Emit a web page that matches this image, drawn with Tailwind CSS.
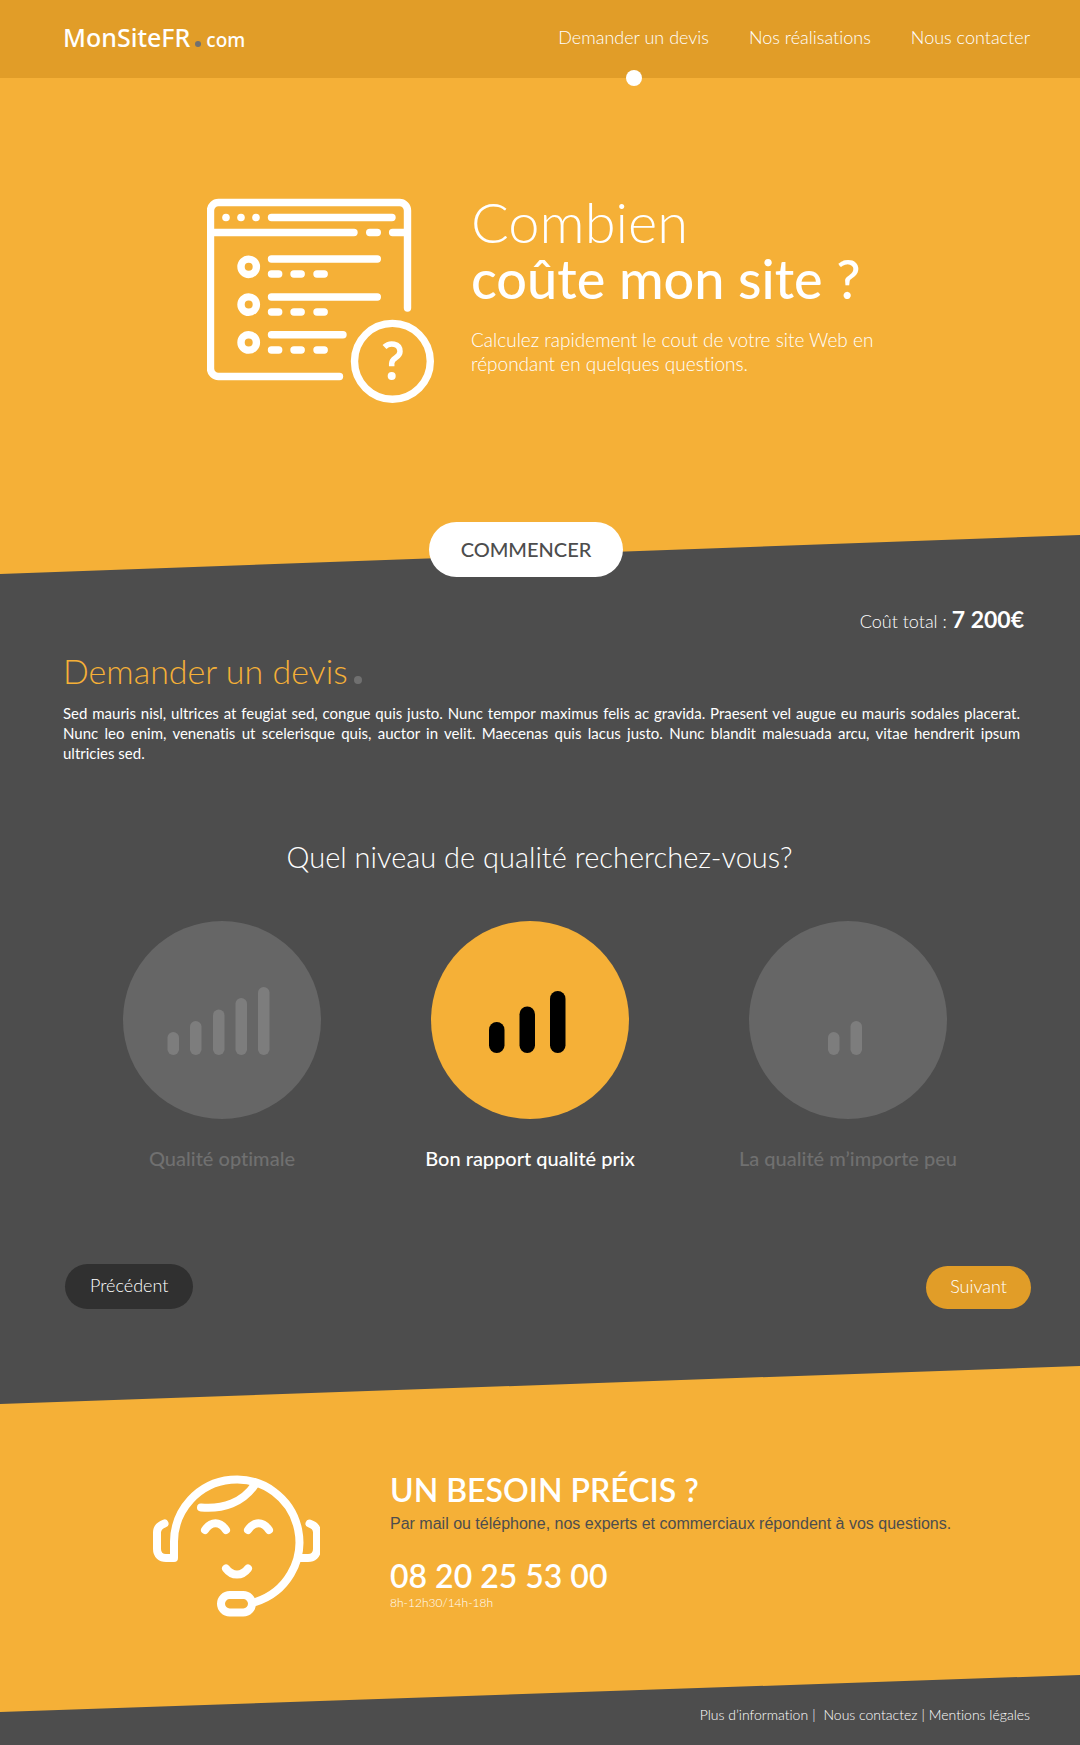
<!DOCTYPE html>
<html lang="fr">
<head>
<meta charset="utf-8">
<meta name="viewport" content="width=device-width, initial-scale=1">
<title>MonSiteFR.com</title>
<script src="https://cdn.jsdelivr.net/npm/@tailwindcss/browser@4"></script>
</head>
<body class="flex min-h-screen flex-col bg-[#f5b037] font-['Lato',sans-serif] font-light text-white [font-variant-ligatures:none]">

<header class="flex h-[78px] items-center justify-between bg-[#e19d28] pr-[50px] pl-[63px]">
  <a href="#" class="flex items-baseline pb-[2px] font-['Noto_Sans',sans-serif] text-[25px] leading-8 font-medium">
    MonSiteFR<span class="mx-[5px] size-[6px] rounded-full bg-[#707070]"></span><span class="text-[19px]">com</span>
  </a>
  <nav class="flex h-full gap-10 text-lg">
    <a href="#devis" class="relative flex items-center pb-1">Demander un devis
      <span class="absolute -bottom-2 left-1/2 size-4 -translate-x-1/2 rounded-full bg-white"></span>
    </a>
    <a href="#" class="flex items-center pb-1">Nos réalisations</a>
    <a href="#" class="flex items-center pb-1">Nous contacter</a>
  </nav>
</header>

<section class="relative z-10 flex flex-col items-center pt-[114px]">
  <div class="flex items-start justify-center gap-9 pl-[6px]">
    <svg class="mt-[6px] h-[206px] w-[228px] shrink-0" viewBox="0 0 228 206" fill="none" stroke="#fff" stroke-width="7.4" stroke-linecap="round" aria-hidden="true">
      <path d="M200.500 110V12.500a8 8 0 0 0-8-8H11.500a8 8 0 0 0-8 8V170.500a8 8 0 0 0 8 8H132.500"/>
      <path d="M64.500 19.500H185M4 34.500H147M162.700 34.500h7.600M185.600 34.500H200M64.500 61H170.300M64.500 76h7.200M87 76h7.200M110 76h7.200M64.500 99H170.300M64.500 114h7.200M87 114h7.200M110 114h7.200M64.500 136.800H136M64.500 152h7.200M87 152h7.200M110 152h7.200"/>
      <g fill="#fff" stroke="none"><circle cx="19" cy="19.500" r="3.800"/><circle cx="34" cy="19.500" r="3.800"/><circle cx="49" cy="19.500" r="3.800"/><circle cx="184.700" cy="178" r="4"/></g>
      <circle cx="41.700" cy="68.800" r="7.700"/><circle cx="41.700" cy="106.600" r="7.700"/><circle cx="41.700" cy="144.400" r="7.700"/>
      <circle cx="185.400" cy="163.300" r="37.900"/>
      <path d="M177.500 149c5-5 15.500-4 15.500 4.500 0 6.500-8.300 6-8.300 12v2.800" stroke-width="5.500" stroke-linecap="butt"/>
    </svg>
    <div class="w-[408px]">
      <h1 class="pt-px"><span class="block text-[56px] leading-[57px]">Combien</span><span class="block text-[54px] leading-[57px] font-medium">coûte mon site ?</span></h1>
      <p class="mt-[21px] text-[19px] leading-6">Calculez rapidement le cout de votre site Web en répondant en quelques questions.</p>
    </div>
  </div>
  <button type="button" class="mt-[118px] mr-7 h-[55px] rounded-full bg-white px-8 pb-[2px] text-xl font-medium text-[#4d4d4d]">COMMENCER</button>
</section>

<main id="devis" class="-mt-[42px] bg-[#4d4d4d] pt-[70px] pr-[60px] pb-[95px] pl-[63px] [clip-path:polygon(0_39px,100%_0,100%_calc(100%-38px),0_100%)]">
  <p class="-mr-1 text-right text-lg leading-7">Coût total : <strong class="text-[23px] font-bold">7 200€</strong></p>
  <h2 class="mt-4 flex items-baseline gap-[6px] text-[34px] leading-10 text-[#f5b037]">Demander un devis<span class="size-2 rounded-full bg-[#707070]"></span></h2>
  <p class="mt-3 text-justify text-[15px] leading-5 font-normal">Sed mauris nisl, ultrices at feugiat sed, congue quis justo. Nunc tempor maximus felis ac gravida. Praesent vel augue eu mauris sodales placerat. Nunc leo enim, venenatis ut scelerisque quis, auctor in velit. Maecenas quis lacus justo. Nunc blandit malesuada arcu, vitae hendrerit ipsum ultricies sed.</p>

  <form>
    <fieldset>
      <legend class="w-full pt-[74px] pr-1 text-center text-[29px] leading-10">Quel niveau de qualité recherchez-vous?</legend>
      <div class="mt-11 flex justify-between pr-[63px] pl-[60px] text-xl leading-7 font-medium">
        <label class="flex cursor-pointer flex-col items-center text-[#707070] has-checked:text-white">
          <input type="radio" name="qualite" value="optimale" class="peer sr-only">
          <span class="mb-[25px] flex size-[198px] items-center justify-center rounded-full bg-[#666] pt-[2px] pr-[6px] text-[#7d7d7d] peer-checked:bg-[#f5b037] peer-checked:text-black">
            <svg class="h-[68px] w-[104px]" viewBox="0 0 104 68" fill="currentColor" aria-hidden="true"><rect x="0.500" y="45" width="11.500" height="23" rx="5.700"/><rect x="23" y="34" width="11.500" height="34" rx="5.700"/><rect x="46" y="22.500" width="11.500" height="45.500" rx="5.700"/><rect x="68.500" y="11" width="11.500" height="57" rx="5.700"/><rect x="91" y="0" width="11.500" height="68" rx="5.700"/></svg>
          </span>
          Qualité optimale
        </label>
        <label class="flex cursor-pointer flex-col items-center text-[#707070] has-checked:text-white">
          <input type="radio" name="qualite" value="rapport" class="peer sr-only" checked>
          <span class="mb-[25px] flex size-[198px] items-center justify-center rounded-full bg-[#666] pt-1 pr-[6px] text-[#7d7d7d] peer-checked:bg-[#f5b037] peer-checked:text-black">
            <svg class="h-[62px] w-[77px]" viewBox="0 0 77 62" fill="currentColor" aria-hidden="true"><rect x="0" y="31" width="15.500" height="31" rx="7.700"/><rect x="30.500" y="15.500" width="15.500" height="46.500" rx="7.700"/><rect x="61" y="0" width="15.500" height="62" rx="7.700"/></svg>
          </span>
          Bon rapport qualité prix
        </label>
        <label class="flex cursor-pointer flex-col items-center text-[#707070] has-checked:text-white">
          <input type="radio" name="qualite" value="libre" class="peer sr-only">
          <span class="mb-[25px] flex size-[198px] items-center justify-center rounded-full bg-[#666] pt-[2px] pr-[6px] text-[#7d7d7d] peer-checked:bg-[#f5b037] peer-checked:text-black">
            <svg class="h-[68px] w-[35px]" viewBox="0 0 35 68" fill="currentColor" aria-hidden="true"><rect x="0" y="45" width="11.500" height="23" rx="5.700"/><rect x="22.500" y="34" width="11.500" height="34" rx="5.700"/></svg>
          </span>
          La qualité m’importe peu
        </label>
      </div>
    </fieldset>
    <div class="mt-[92px] -mr-[11px] flex items-end justify-between pl-[2px] text-lg">
      <button type="button" class="h-[45px] rounded-full bg-[#303030] px-[25px] pb-[3px]">Précédent</button>
      <button type="button" class="h-[43px] rounded-full bg-[#e19d28] px-6 pb-[3px]">Suivant</button>
    </div>
  </form>
</main>

<section class="flex items-start gap-[70px] pt-[66px] pb-[57px] pl-[152px]">
  <svg class="mt-1 h-[144px] w-[168px] shrink-0" viewBox="0 0 168 144" fill="none" stroke="#fff" stroke-width="8" stroke-linecap="round" stroke-linejoin="round" aria-hidden="true">
    <path d="M12.500 49.500c-4 1.500-7.500 4-7.500 9V75c0 6 4 9 9 9h8V67.500a62.700 62.700 0 1 1 81.500 60.500"/>
    <path d="M157.500 49.500c4.500 1.500 7.500 4 7.500 9V75c0 6-4 9-9 9h-8"/>
    <path d="M49 33.500c22 2 42-5 54-23M53 56c6-9 15-9 21 0M96 56c6-9 15-9 21 0M74 94.500c6 8 16 8 22 0"/>
    <rect x="69" y="121" width="31" height="17.500" rx="8.700"/>
  </svg>
  <div>
    <h2 class="text-[32px] leading-10 font-semibold">UN BESOIN PRÉCIS ?</h2>
    <p class="mt-[2px] font-['Liberation_Sans',sans-serif] text-base leading-6 font-normal text-[#4d4d4d]">Par mail ou téléphone, nos experts et commerciaux répondent à vos questions.</p>
    <p class="mt-[22px] text-[32px] leading-9 font-semibold">08 20 25 53 00</p>
    <p class="mt-px text-xs leading-4">8h-12h30/14h-18h</p>
  </div>
</section>

<footer class="flex grow items-start justify-end bg-[#4d4d4d] pt-[30px] pr-[50px] pb-5 text-sm [clip-path:polygon(0_37px,100%_0,100%_100%,0_100%)]">
  <a href="#">Plus d’information</a><span class="mr-2 ml-1">|</span><a href="#">Nous contactez</a><span class="mx-1">|</span><a href="#">Mentions légales</a>
</footer>

</body>
</html>
